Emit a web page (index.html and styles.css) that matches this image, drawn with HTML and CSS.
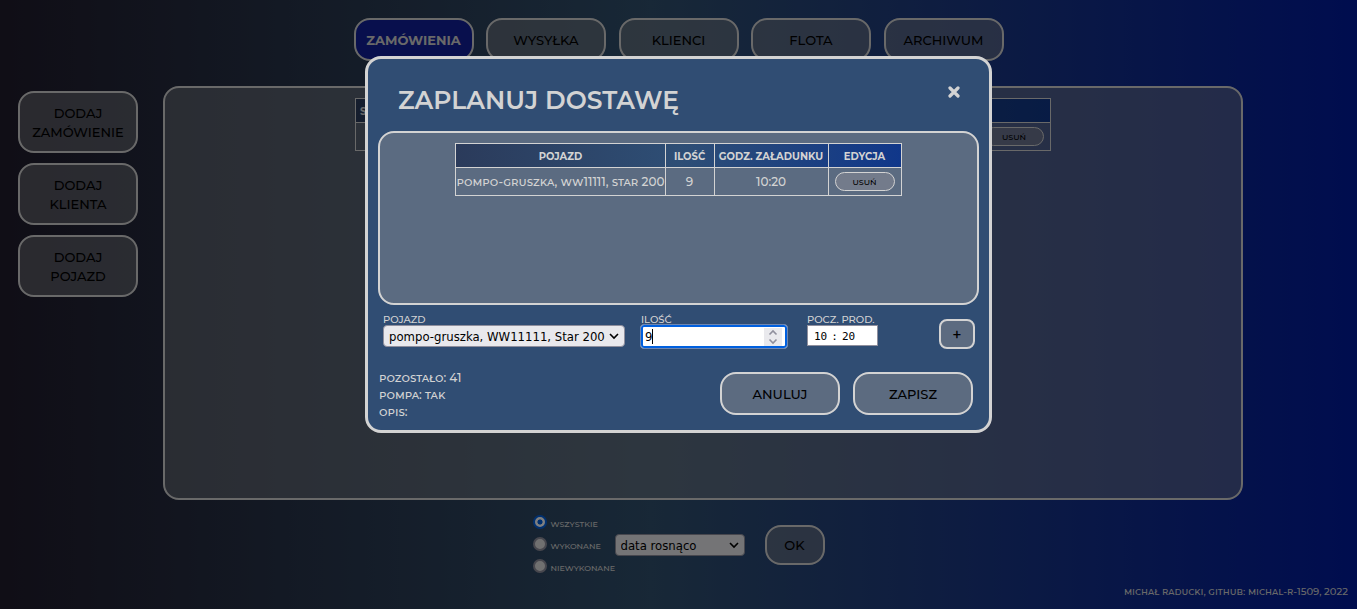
FILE: index.html
```html
<!DOCTYPE html>
<html lang="pl">
<head>
<meta charset="utf-8">
<meta name="viewport" content="width=device-width, initial-scale=1">
<title>Zaplanuj dostawę</title>
<link rel="stylesheet" href="styles.css">
</head>
<body>
<div class="page">
  <nav class="tabs">
    <button class="btn tab tab-active" type="button">ZAMÓWIENIA</button>
    <button class="btn tab" type="button">WYSYŁKA</button>
    <button class="btn tab" type="button">KLIENCI</button>
    <button class="btn tab" type="button">FLOTA</button>
    <button class="btn tab" type="button">ARCHIWUM</button>
  </nav>
  <div class="middle">
    <aside class="sidebar">
      <button class="btn side-btn" type="button">DODAJ ZAMÓWIENIE</button>
      <button class="btn side-btn" type="button">DODAJ KLIENTA</button>
      <button class="btn side-btn" type="button">DODAJ POJAZD</button>
    </aside>
    <main class="panel board">
      <table class="grid orders">
        <thead><tr><th>S</th><th></th></tr></thead>
        <tbody><tr><td></td><td class="edit"><button class="mini" type="button">USUŃ</button></td></tr></tbody>
      </table>
    </main>
  </div>
  <form class="filters">
    <div class="radios">
      <label class="radio"><input type="radio" name="state" checked>WSZYSTKIE</label>
      <label class="radio"><input type="radio" name="state">WYKONANE</label>
      <label class="radio"><input type="radio" name="state">NIEWYKONANE</label>
    </div>
    <div class="select-box sort">
      <select class="select" aria-label="Sortowanie"><option>data rosnąco</option></select>
      <svg class="chevron" viewBox="0 0 10 10"><path d="M1 3l4 4 4-4" fill="none" stroke="#000" stroke-width="1.6"/></svg>
    </div>
    <button class="btn ok" type="button">OK</button>
  </form>
  <footer class="credits">michał raducki, github: michal-r-1509, 2022</footer>
</div>

<div class="overlay">
  <section class="modal" role="dialog" aria-labelledby="modal-title">
    <header class="modal-head">
      <h1 class="modal-title" id="modal-title">ZAPLANUJ DOSTAWĘ</h1>
      <button class="close" type="button" aria-label="Zamknij">
        <svg viewBox="0 0 12 12" width="12" height="12"><path d="M2 2l8 8M10 2l-8 8" stroke="#d3d3d3" stroke-width="3.2" stroke-linecap="round"/></svg>
      </button>
    </header>
    <div class="panel deliveries">
      <table class="grid">
        <colgroup><col class="c-vehicle"><col class="c-amount"><col class="c-time"><col class="c-edit"></colgroup>
        <thead><tr><th>POJAZD</th><th>ILOŚĆ</th><th>GODZ. ZAŁADUNKU</th><th>EDYCJA</th></tr></thead>
        <tbody><tr><td>pompo-gruszka, ww11111, star 200</td><td>9</td><td>10:20</td><td class="edit"><button class="mini" type="button">USUŃ</button></td></tr></tbody>
      </table>
    </div>
    <form class="entry">
      <div class="field vehicle">
        <label for="vehicle">POJAZD</label>
        <div class="select-box">
          <select class="select" id="vehicle"><option>pompo-gruszka, WW11111, Star 200</option></select>
          <svg class="chevron" viewBox="0 0 10 10"><path d="M1 3l4 4 4-4" fill="none" stroke="#000" stroke-width="1.6"/></svg>
        </div>
      </div>
      <div class="field amount">
        <label for="amount">ILOŚĆ</label>
        <div class="number-box">
          <input class="number" id="amount" type="number" value="9">
          <span class="caret"></span>
          <svg class="spin" viewBox="0 0 18 18"><path d="M5.500 6.500L9 3l3.500 3.500M5.500 11.500L9 15l3.500-3.500" fill="none" stroke="#8f8f9d" stroke-width="1.600"/></svg>
        </div>
      </div>
      <div class="field start">
        <label for="start">POCZ. PROD.</label>
        <input class="time" id="start" type="time" value="10:20">
      </div>
      <button class="btn add" type="button" aria-label="Dodaj">+</button>
    </form>
    <div class="modal-foot">
      <div class="info">
        <p>pozostało: 41</p>
        <p>pompa: tak</p>
        <p>opis:</p>
      </div>
      <div class="actions">
        <button class="btn action" type="button">ANULUJ</button>
        <button class="btn action" type="button">ZAPISZ</button>
      </div>
    </div>
  </section>
</div>
</body>
</html>
```
FILE: styles.css
```css
* { box-sizing: border-box; }

body {
  margin: 0;
  font-family: Montserrat, Inter, sans-serif;
  font-weight: 500;
  color: #d3d3d3;
}

.page {
  min-height: 100vh;
  display: flex;
  flex-direction: column;
  padding-top: 18px;
  background: linear-gradient(to right, #201c2c, #30506e 48%, #001a9e);
}

.btn {
  border: 2px solid #d3d3d3;
  border-radius: 16px;
  background: rgba(136, 138, 142, 0.5);
  color: #000;
  font: inherit;
  font-size: 13px;
  padding: 0 4px;
}

.tabs {
  display: flex;
  justify-content: space-between;
  width: 650px;
  max-width: 100%;
  margin: 0 auto;
}
.tab { width: 120px; height: 43px; }
.tab-active { background: #101f9a; color: #d3d3d3; font-weight: 700; }

.middle {
  display: flex;
  gap: 25px;
  margin: 25px 114px 0 18px;
}
.sidebar {
  display: flex;
  flex-direction: column;
  gap: 10px;
  width: 120px;
  padding-top: 5px;
}
.side-btn { height: 62px; line-height: 19px; padding: 2px 12px 0; }

.panel {
  display: flex;
  justify-content: center;
  align-items: flex-start;
  padding: 10px;
  border: 2px solid #d3d3d3;
  border-radius: 16px;
  background: rgba(134, 138, 144, 0.5);
}
.board { flex: 1; min-height: 68vh; }

.grid {
  border-collapse: collapse;
  text-align: center;
  white-space: nowrap;
}
.grid thead { background: linear-gradient(to right, #2b3b5b, #2e4e75 50%, #10378a); }
.grid th {
  height: 24px;
  padding: 2px 3px 0;
  border: 1px solid #d3d3d3;
  font-size: 10px;
  font-weight: 700;
}
.grid td {
  height: 28px;
  padding: 0;
  border: 1px solid #d3d3d3;
  font-size: 12px;
  font-variant: small-caps;
}
.grid .edit { padding: 0 6px; line-height: 0; }
.c-vehicle { width: 206px; }
.c-amount { width: 49px; }
.c-time { width: 114px; }
.c-edit { width: 73px; }

.orders { width: 696px; }
.orders th:first-child { text-align: left; padding-left: 4px; }
.orders .edit { width: 73px; }

.mini {
  width: 60px;
  height: 19px;
  border: 1px solid #d3d3d3;
  border-radius: 10px;
  background: rgba(140, 140, 150, 0.5);
  color: #000;
  font: inherit;
  font-size: 8px;
  font-variant: normal;
  line-height: 12px;
  padding: 0;
}

.filters {
  display: flex;
  align-items: center;
  align-self: center;
  margin-top: 11px;
}
.radios { width: 82px; margin-top: 2px; }
.radio {
  display: flex;
  align-items: center;
  gap: 4px;
  height: 22px;
  font-size: 8px;
  white-space: nowrap;
}
.radio input {
  appearance: none;
  flex: none;
  width: 14px;
  height: 14px;
  margin: 0 0 4px;
  border: 2px solid #8f8f9d;
  border-radius: 50%;
  background: #e0e0e0;
}
.radio input:checked {
  border: 2px solid #0060df;
  background: radial-gradient(circle, #0060df 30%, #fff 42%);
}

.select-box { position: relative; }
.select {
  display: block;
  appearance: none;
  width: 100%;
  height: 22px;
  padding: 0 5px;
  border: 1px solid #8f8f9d;
  border-radius: 4px;
  background: #e9e9ed;
  color: #000;
  font-family: Tahoma, "DejaVu Sans Condensed", "DejaVu Sans", sans-serif;
  font-size: 13px;
}
.chevron {
  position: absolute;
  right: 6px;
  top: 6px;
  width: 10px;
  height: 10px;
  pointer-events: none;
}
.sort { width: 130px; }
.ok { width: 60px; height: 40px; margin-left: 20px; }

.credits {
  margin: auto 9px 11px auto;
  font-size: 10px;
  font-variant: small-caps;
}

.overlay {
  position: fixed;
  inset: 0;
  display: flex;
  justify-content: center;
  align-items: flex-start;
  padding-top: 56px;
  background: rgba(0, 0, 0, 0.5);
}
.modal {
  width: 627px;
  padding: 10px;
  border: 3px solid #d3d3d3;
  border-radius: 16px;
  background: #304d73;
}
.modal-head {
  display: flex;
  justify-content: space-between;
  height: 62px;
  padding: 0 15px 0 20px;
}
.modal-title {
  margin: 15px 0 0;
  font-size: 25px;
  line-height: 32px;
  font-weight: 600;
}
.close {
  align-self: flex-start;
  display: flex;
  margin-top: 13px;
  padding: 4px;
  border: 0;
  background: none;
}
.deliveries { min-height: 174px; }

.entry {
  display: flex;
  align-items: flex-start;
  padding: 9px 4px 0 5px;
}
.field label {
  display: block;
  font-size: 10px;
  line-height: 11px;
}
.vehicle { width: 242px; }
.amount { width: 148px; margin-left: 15px; }
.amount label { padding-left: 1px; }
.start { width: 71px; margin-left: 19px; }
.start label { white-space: nowrap; }

.number-box { position: relative; margin-top: -1px; }
.number {
  display: block;
  width: 100%;
  height: 25px;
  padding: 0 4px;
  border: 1px solid #6f86b0;
  border-radius: 4px;
  box-shadow: inset 0 0 0 2px #0060df;
  background: #fff;
  font-family: Tahoma, "DejaVu Sans Condensed", "DejaVu Sans", sans-serif;
  font-size: 13px;
  appearance: textfield;
}
.caret {
  position: absolute;
  left: 12px;
  top: 5px;
  width: 1px;
  height: 15px;
  background: #000;
}
.spin {
  position: absolute;
  right: 6px;
  top: 4px;
  width: 18px;
  height: 18px;
  background: #e9e9ed;
}
.time {
  display: block;
  width: 71px;
  height: 21px;
  padding: 2px 5px 0;
  border: 1px solid #8f8f9d;
  background: #fff;
  color: #000;
  font-family: "DejaVu Sans Mono", monospace;
  font-size: 11px;
}
.time::-webkit-calendar-picker-indicator,
.time::-webkit-datetime-edit-ampm-field { display: none; }
.time::-webkit-datetime-edit-text { padding: 0 3px; }

.add {
  width: 36px;
  height: 30px;
  margin: 5px 0 0 auto;
  border-radius: 8px;
  padding: 0;
  font-size: 16px;
}

.modal-foot {
  display: flex;
  justify-content: space-between;
  padding: 20px 6px 0 1px;
}
.info {
  font-size: 12px;
  font-variant: small-caps;
  line-height: 17px;
}
.info p { margin: 0; }
.actions { display: flex; gap: 13px; padding-top: 3px; }
.action { width: 120px; height: 43px; }
```
